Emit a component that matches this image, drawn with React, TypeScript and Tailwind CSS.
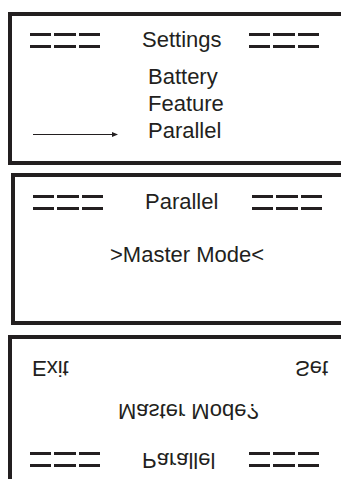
const ink = 'bg-[#231f20]';

function Dashes() {
  // two rows of three short bars, drawn like the "===" on the LCD
  return (
    <div className="flex w-[70px] flex-col gap-[9px]">
      {[0, 1].map((r) => (
        <div key={r} className="flex gap-[3px]">
          <div className={`h-[3px] flex-1 ${ink}`} />
          <div className={`h-[3px] flex-1 ${ink}`} />
          <div className={`h-[3px] flex-1 ${ink}`} />
        </div>
      ))}
    </div>
  );
}

function Header({ title, className = '' }: { title: string; className?: string }) {
  return (
    <div className={`flex h-[22px] items-center pl-[18px] ${className}`}>
      <Dashes />
      <div className="w-[149px] shrink-0 pl-[42px] text-[22px] leading-none">{title}</div>
      <Dashes />
    </div>
  );
}

function Arrow() {
  return (
    <svg width="136" height="27" viewBox="0 0 136 27">
      <line x1="21" y1="17.5" x2="102" y2="17.5" stroke="#231f20" strokeWidth="1" />
      <path d="M100 15 L106 17.5 L100 20 Z" fill="#231f20" />
    </svg>
  );
}

export default function App() {
  const menu = ['Battery', 'Feature', 'Parallel'];

  return (
    <div className="relative h-[479px] w-[341px] overflow-hidden bg-white pt-[12px] font-['Liberation_Sans',Arial,sans-serif] text-[#231f20]">
      {/* Settings menu */}
      <div className="ml-[8px] h-[153px] w-[400px] border-y-4 border-l-4 border-[#231f20]">
        <Header title="Settings" className="mt-[13px]" />
        <div className="mt-[12px]">
          {menu.map((item, i) => (
            <div key={item} className="flex h-[27px] text-[22px] leading-[27px]">
              <div className="w-[136px]">{i === menu.length - 1 && <Arrow />}</div>
              <span>{item}</span>
            </div>
          ))}
        </div>
      </div>

      {/* Parallel screen */}
      <div className="mt-[8px] ml-[11px] h-[152px] w-[400px] border-y-4 border-l-4 border-[#231f20]">
        <Header title="Parallel" className="mt-[14px]" />
        <div className="mt-[31px] pl-[95px] text-[22px] leading-none">&gt;Master Mode&lt;</div>
      </div>

      {/* Confirm screen, printed upside down */}
      <div className="mt-[10px] ml-[8px] h-[160px] w-[400px] border-t-4 border-l-4 border-[#231f20]">
        <div className="mt-[18px] flex h-[22px] -scale-y-100 text-[22px] leading-none">
          <div className="w-[283px] pl-[20px]">Exit</div>
          <div>Set</div>
        </div>
        <div className="mt-[21px] -scale-y-100 pl-[106px] text-[22px] leading-none">Master Mode?</div>
        <Header title="Parallel" className="mt-[27px] -scale-y-100" />
      </div>
    </div>
  );
}
